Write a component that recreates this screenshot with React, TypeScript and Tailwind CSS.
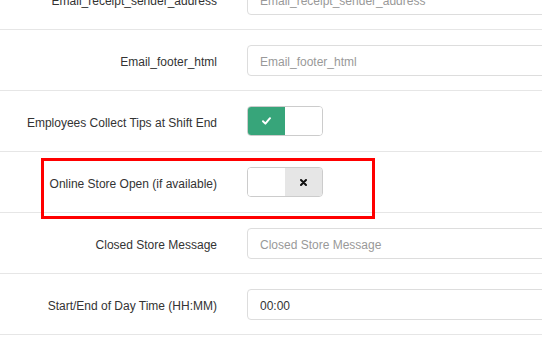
import React from "react";

type Row =
  | { label: string; kind: "input"; placeholder: string; value?: string }
  | { label: string; kind: "switch"; on: boolean; highlight?: boolean };

const rows: Row[] = [
  { label: "Email_receipt_sender_address", kind: "input", placeholder: "Email_receipt_sender_address" },
  { label: "Email_footer_html", kind: "input", placeholder: "Email_footer_html" },
  { label: "Employees Collect Tips at Shift End", kind: "switch", on: true },
  { label: "Online Store Open (if available)", kind: "switch", on: false, highlight: true },
  { label: "Closed Store Message", kind: "input", placeholder: "Closed Store Message" },
  { label: "Start/End of Day Time (HH:MM)", kind: "input", placeholder: "HH:MM", value: "00:00" },
];

const Toggle: React.FC<{ on: boolean }> = ({ on }) => (
  <div className="flex h-[30px] w-[76px] overflow-hidden rounded-[4px] border border-[#cccccc] bg-white">
    <div className={`flex w-[37px] items-center justify-center ${on ? "bg-[#37a57a]" : "bg-white"}`}>
      {on && (
        <svg width="9" height="8" viewBox="0 0 9 8" fill="none">
          <path d="M1 4.2 L3.4 6.6 L8 1.2" stroke="white" strokeWidth="2" strokeLinecap="round" strokeLinejoin="round" />
        </svg>
      )}
    </div>
    <div className={`flex flex-1 items-center justify-center ${on ? "bg-white" : "bg-[#e6e6e6]"}`}>
      {!on && (
        <svg width="7" height="7" viewBox="0 0 7 7" fill="none">
          <path d="M1 1 L6 6 M6 1 L1 6" stroke="#111" strokeWidth="2" strokeLinecap="round" />
        </svg>
      )}
    </div>
  </div>
);

export default function App() {
  return (
    <div className="h-[348px] w-[542px] overflow-hidden bg-white font-['Liberation_Sans',Arial,sans-serif] text-[12px] text-[#333333]">
      <div className="-mt-[31px]">
        {rows.map((r) => (
          <div key={r.label} className="relative flex h-[61px] items-center border-b border-[#e6e6e6]">
            <div className="w-[217px] shrink-0 pt-[3px] text-right">{r.label}</div>
            <div className="ml-[30px] shrink-0">
              {r.kind === "input" ? (
                <input
                  readOnly
                  placeholder={r.placeholder}
                  value={r.value ?? ""}
                  className="h-[31px] w-[320px] rounded-[4px] border border-[#dddddd] px-3 pt-[3px] text-[12px] text-[#333333] placeholder:text-[#999999] outline-none"
                />
              ) : (
                <Toggle on={r.on} />
              )}
            </div>
            {r.kind === "switch" && r.highlight && (
              <div className="pointer-events-none absolute left-[41px] top-[6px] h-[61px] w-[334px] border-[3px] border-[#ff0000]" />
            )}
          </div>
        ))}
      </div>
    </div>
  );
}
